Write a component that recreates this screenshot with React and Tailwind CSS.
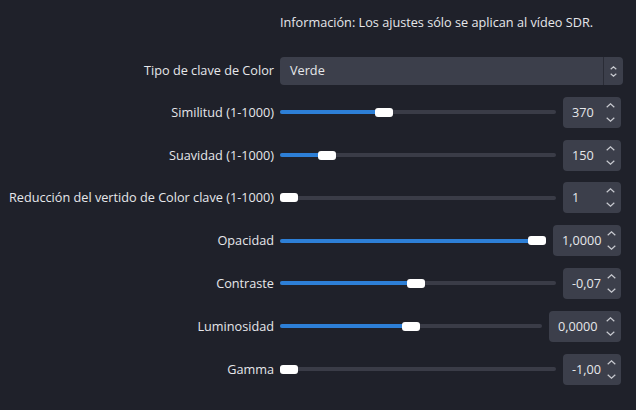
import React from "react";

const sliders = [
  { label: "Similitud (1-1000)", value: "370", pos: 0.369, box: "w-[58px]" },
  { label: "Suavidad (1-1000)", value: "150", pos: 0.149, box: "w-[58px]" },
  { label: "Reducción del vertido de Color clave (1-1000)", value: "1", pos: 0, box: "w-[58px]" },
  { label: "Opacidad", value: "1,0000", pos: 1, box: "w-[68px]" },
  { label: "Contraste", value: "-0,07", pos: 0.491, box: "w-[58px]" },
  { label: "Luminosidad", value: "0,0000", pos: 0.5, box: "w-[72px]" },
  { label: "Gamma", value: "-1,00", pos: 0, box: "w-[58px]" },
];

const Chevron = ({ up, small }) => {
  const w = small ? 7 : 9;
  const h = small ? 4 : 5;
  return (
    <svg width={w} height={h} viewBox={`0 0 ${w} ${h}`}>
      <path
        d={
          up
            ? `M0.7 ${h - 0.7} L${w / 2} 0.8 L${w - 0.7} ${h - 0.7}`
            : `M0.7 0.7 L${w / 2} ${h - 0.8} L${w - 0.7} 0.7`
        }
        fill="none"
        stroke="#c8cad0"
        strokeWidth="1.2"
      />
    </svg>
  );
};

const Slider = ({ pos }) => (
  <div className="relative flex-1 h-[10px] flex items-center">
    <div className="absolute left-0 right-0 h-[4px] rounded-full bg-[#3a3c47]" />
    <div
      className="absolute left-0 h-[4px] rounded-full bg-[#2d7fd6]"
      style={{ width: `calc((100% - 18px) * ${pos} + 9px)` }}
    />
    <div
      className="absolute h-[9px] w-[18px] rounded-[3px] bg-white"
      style={{ left: `calc((100% - 18px) * ${pos})` }}
    />
  </div>
);

const Row = ({ label, children, h }) => (
  <div className={`flex items-center ${h}`}>
    <div className="w-[274px] shrink-0 text-right whitespace-nowrap">{label}</div>
    <div className="flex-1 flex items-center pl-[6px]">{children}</div>
  </div>
);

export default function App() {
  return (
    <div
      className="w-[636px] h-[410px] bg-[#1f212a] text-[#e6e7ea] text-[12.7px] pr-[13px] pt-[12px]"
      style={{ fontFamily: "'Open Sans', 'Noto Sans', sans-serif" }}
    >
      <div className="pl-[280px] h-[20px] leading-[20px]">
        Información: Los ajustes sólo se aplican al vídeo SDR.
      </div>

      <div className="flex flex-col gap-[11.8px] mt-[25px]">
        <Row label="Tipo de clave de Color" h="h-[28px]">
          <div className="flex-1 h-[28px] rounded-[4px] bg-[#3c3f4b] flex items-center">
            <div className="flex-1 pl-[10px]">Verde</div>
            <div className="w-[20px] h-full border-l border-[#2a2c36] flex flex-col items-center justify-center gap-[3px]">
              <Chevron up small />
              <Chevron small />
            </div>
          </div>
        </Row>

        {sliders.map((s) => (
          <Row key={s.label} label={s.label} h="h-[31px]">
            <Slider pos={s.pos} />
            <div
              className={`${s.box} ml-[7px] mr-[2px] h-[31px] rounded-[4px] bg-[#3c3f4b] flex items-center shrink-0`}
            >
              <div className="flex-1 pl-[9px]">{s.value}</div>
              <div className="w-[22px] flex flex-col items-center gap-[9px]">
                <Chevron up />
                <Chevron />
              </div>
            </div>
          </Row>
        ))}
      </div>
    </div>
  );
}
